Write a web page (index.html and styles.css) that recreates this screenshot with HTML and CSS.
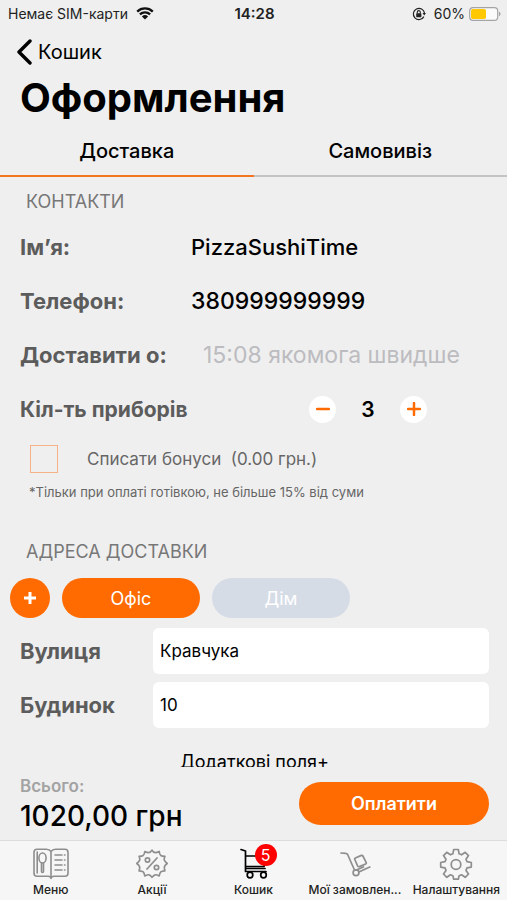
FILE: index.html
```html
<!DOCTYPE html>
<html lang="uk">
<head>
<meta charset="utf-8">
<meta name="viewport" content="width=device-width, initial-scale=1">
<title>Оформлення</title>
<link rel="stylesheet" href="styles.css">
</head>
<body>
<div class="status">
  <div class="status-side">
    <span>Немає SIM-карти</span>
    <svg class="wifi" viewBox="0 0 18 13"><path d="M1.2 4.6a11.2 11.2 0 0 1 15.6 0M3.9 7.4a7.4 7.4 0 0 1 10.2 0" fill="none" stroke="#111" stroke-width="2.3"/><path d="M9 12.6 5.9 9.5a4.5 4.5 0 0 1 6.2 0z" fill="#111"/></svg>
  </div>
  <strong class="clock">14:28</strong>
  <div class="status-side status-right">
    <svg class="lock" viewBox="0 0 14 14"><path d="M11.9 9.6a5.6 5.6 0 1 1 .6-3.4" fill="none" stroke="#222" stroke-width="1.2"/><path d="M10.5 6h3.5l-1.8 2.6z" fill="#222"/><rect x="4.2" y="6.2" width="5.2" height="4" rx=".6" fill="#222"/><path d="M5.3 6.5V5.1a1.5 1.5 0 0 1 3 0v1.4" fill="none" stroke="#222" stroke-width="1.1"/></svg>
    <span>60%</span>
    <svg class="battery" viewBox="0 0 32 14"><rect x=".7" y=".7" width="28" height="12.6" rx="3.4" fill="#fafafa" stroke="#a4a4a4" stroke-width="1.2"/><rect x="2" y="2" width="15" height="10" rx="1.8" fill="#ffc800"/><path d="M30 4.800c2 .6 2 3.800 0 4.400z" fill="#a4a4a4"/></svg>
  </div>
</div>

<header>
  <a class="back" href="#cart">
    <svg viewBox="0 0 16 26"><path d="M14 2 3 13l11 11" fill="none" stroke="#000" stroke-width="3.4" stroke-linecap="round" stroke-linejoin="round"/></svg>
    <span>Кошик</span>
  </a>
  <h1>Оформлення</h1>
</header>

<div class="tabs" role="tablist">
  <button class="tab tab-active" type="button" role="tab" aria-selected="true">Доставка</button>
  <button class="tab" type="button" role="tab" aria-selected="false">Самовивіз</button>
</div>

<main>
  <h2>КОНТАКТИ</h2>
  <div class="row">
    <label for="name">Ім’я:</label>
    <input class="plain" id="name" type="text" value="PizzaSushiTime">
  </div>
  <div class="row">
    <label for="phone">Телефон:</label>
    <input class="plain phone" id="phone" type="tel" value="380999999999">
  </div>
  <div class="row">
    <label for="time">Доставити о:</label>
    <input class="plain time" id="time" type="text" placeholder="15:08 якомога швидше">
  </div>
  <div class="row">
    <span class="row-label">Кіл-ть приборів</span>
    <div class="stepper">
      <button type="button" aria-label="Менше"><svg viewBox="0 0 14 14"><path d="M1 7h12"/></svg></button>
      <output>3</output>
      <button type="button" aria-label="Більше"><svg viewBox="0 0 14 14"><path d="M1 7h12M7 1v12"/></svg></button>
    </div>
  </div>
  <div class="bonus">
    <input id="bonus" type="checkbox">
    <label for="bonus">Списати бонуси&nbsp; (0.00 грн.)</label>
  </div>
  <p class="note">*Тільки при оплаті готівкою, не більше 15% від суми</p>

  <h2>АДРЕСА ДОСТАВКИ</h2>
  <div class="chips">
    <button class="add" type="button" aria-label="Додати адресу"><svg viewBox="0 0 14 14"><path d="M1 7h12M7 1v12"/></svg></button>
    <button class="chip chip-active" type="button">Офіс</button>
    <button class="chip" type="button">Дім</button>
  </div>
  <div class="field">
    <label for="street">Вулиця</label>
    <input id="street" type="text" value="Кравчука">
  </div>
  <div class="field">
    <label for="house">Будинок</label>
    <input id="house" type="text" value="10">
  </div>
  <button class="more" type="button">Додаткові поля+</button>
</main>

<section class="total">
  <div>
    <div class="total-label">Всього:</div>
    <div class="total-sum">1020,00 грн</div>
  </div>
  <button class="pay" type="button">Оплатити</button>
</section>

<nav>
  <a href="#menu">
    <svg viewBox="0 0 36 32"><g fill="none" stroke="#8e8e8e" stroke-width="1.600" stroke-linecap="round" stroke-linejoin="round"><path d="M18 3.500C17 2 15.500 1.200 13.500 1.200H4a3 3 0 0 0-3 3v21a3 3 0 0 0 3 3h11q3 0 3 2.300 0-2.300 3-2.300h11a3 3 0 0 0 3-3v-21a3 3 0 0 0-3-3h-9.500C20.500 1.200 19 2 18 3.500zV29"/><ellipse cx="9.500" cy="10" rx="3.600" ry="5"/><path d="M8.500 15v8.500a1 1 0 0 0 2 0V15M4.200 4v21M22 7h7M22 12h7M22 17h7M22 22h7M31.500 7h.5M31.500 12h.5M31.500 17h.5M31.500 22h.5"/></g></svg>
    <span>Меню</span>
  </a>
  <a href="#promo">
    <svg viewBox="0 0 36 32"><g fill="none" stroke="#8e8e8e" stroke-width="1.700" stroke-linecap="round" stroke-linejoin="round"><path d="M18 2.200q1.800 2.600 3.200 2.500t4-1.200q.4 3.200 1.600 3.900t4.100.9q-1.200 2.900-.5 4.100t2.800 3.100q-2.500 1.900-2.800 3.200t.5 4.100q-3.100.2-4.100 1.100t-1.600 4q-2.800-1.400-4.100-1.100T18 29.300q-1.800-2.300-3.100-2.500t-4.100 1.100q-.6-3.100-1.600-4t-4.100-1.100q.9-2.800.5-4.100t-2.800-3.200q2.200-1.900 2.800-3.100t-.5-4.100q2.900-.2 4.100-.9t1.600-3.900q2.600 1.300 4 1.200T18 2.200z"/><path d="m13 21 10-11"/><circle cx="13.500" cy="12" r="2.200"/><circle cx="22.500" cy="19.500" r="2.200"/></g></svg>
    <span>Акції</span>
  </a>
  <a href="#cart" aria-current="page">
    <svg viewBox="0 0 36 32"><g fill="none" stroke="#000" stroke-width="1.700" stroke-linecap="round" stroke-linejoin="round"><path d="M5 1.500 9.500 3v20.500H30M10 8h20.500l-2.500 10.500H10M10 20.500h19"/><circle cx="14" cy="27" r="2.800"/><circle cx="27.500" cy="27" r="2.800"/></g></svg>
    <span>Кошик</span>
    <b class="badge">5</b>
  </a>
  <a href="#orders">
    <svg viewBox="0 0 36 32"><g fill="none" stroke="#8e8e8e" stroke-width="1.700" stroke-linecap="round" stroke-linejoin="round"><path d="M4 5l4.800.3q1.200 0 1.800 1.200L17.500 22"/><circle cx="19" cy="24.800" r="2.900"/><path d="m21.800 24 11-5M20 21.700l6.500-2.700M20.600 17.800l-2.800-6.300q-.5-1 .6-1.500l6-2.600q1-.4 1.500.6l3.200 6.300q.6 1.200-.5 1.700l-5.600 2.400q-1.700.8-2.400-.6z"/></g></svg>
    <span>Мої замовлен...</span>
  </a>
  <a href="#settings">
    <svg viewBox="0 0 36 32"><g fill="none" stroke="#8e8e8e" stroke-width="1.700" stroke-linejoin="round"><path d="M15.700 1.500h4.600l.8 4.300 2.500 1 3.600-2.500 3.300 3.300-2.500 3.600 1 2.500 4.300.8v4.600l-4.300.8-1 2.500 2.500 3.600-3.300 3.300-3.600-2.500-2.500 1-.8 3.400h-4.600l-.8-3.400-2.500-1-3.600 2.500-3.300-3.300L8 22.400l-1-2.500-4.300-.8v-4.600l4.300-.8 1-2.500-2.500-3.600 3.300-3.300 3.600 2.500 2.500-1z"/><circle cx="18" cy="16.500" r="4.800"/></g></svg>
    <span>Налаштування</span>
  </a>
</nav>
</body>
</html>
```
FILE: styles.css
```css
* {
  box-sizing: border-box;
}

body {
  margin: 0;
  height: 100vh;
  display: flex;
  flex-direction: column;
  background: #efefef;
  color: #000;
  font-family: Inter, "Noto Sans", sans-serif;
  font-size: 20px;
}

button,
input {
  font: inherit;
  color: inherit;
  border: 0;
  padding: 0;
  margin: 0;
  background: none;
}

a {
  color: inherit;
  text-decoration: none;
}

svg {
  display: block;
  flex: none;
}

.status {
  display: flex;
  align-items: center;
  height: 27px;
  padding: 0 6px 0 8px;
  font-size: 14px;
  color: #222;
}

.status-side {
  flex: 1;
  display: flex;
  align-items: center;
  gap: 8px;
}

.status-right {
  justify-content: flex-end;
  gap: 4px;
}

.clock {
  font-size: 15px;
  font-weight: 600;
}

.wifi {
  width: 18px;
  height: 13px;
}

.lock {
  width: 14px;
  height: 14px;
  margin-right: 4px;
}

.battery {
  width: 32px;
  height: 14px;
}

header {
  padding: 9px 16px 0;
}

.back {
  display: inline-flex;
  align-items: center;
  gap: 6px;
  height: 32px;
}

.back svg {
  width: 16px;
  height: 26px;
}

h1 {
  margin: 3px 4px 0;
  font-size: 40px;
  line-height: 50px;
  font-weight: 700;
}

.tabs {
  display: flex;
  height: 54px;
}

.tab {
  flex: 1;
  padding-top: 3px;
  border-bottom: 2px solid #c4c4c4;
  font-weight: 500;
}

.tab-active {
  border-bottom-color: #f47521;
}

main {
  flex: 1;
  min-height: 0;
  overflow: hidden;
  padding: 13px 18px 0 20px;
}

h2 {
  margin: 0 0 6px 6px;
  font-size: 18px;
  line-height: 24px;
  font-weight: 400;
  color: #777;
}

.row {
  display: flex;
  align-items: center;
  height: 54px;
}

.row label,
.row-label {
  width: 171px;
  flex: none;
  font-weight: 700;
  color: #5c5c5c;
}

.row label {
  font-size: 22px;
}

.row-label {
  font-size: 21px;
}

.plain {
  flex: 1;
  min-width: 0;
  height: 40px;
  font-size: 22px;
  font-weight: 500;
}

.phone {
  font-size: 23px;
}

.time {
  padding-left: 12px;
  font-weight: 400;
  font-size: 23px;
}

.time::placeholder {
  color: #bcbcc0;
}

.stepper {
  display: flex;
  align-items: center;
  justify-content: space-between;
  width: 118px;
  margin: 0 62px 0 auto;
  font-size: 21px;
  font-weight: 600;
}

.stepper button {
  display: grid;
  place-items: center;
  width: 27px;
  height: 27px;
  border-radius: 50%;
  background: #fff;
}

.stepper svg,
.add svg {
  width: 14px;
  height: 14px;
  stroke: #ff6b00;
  stroke-width: 2.5;
  stroke-linecap: round;
}

.bonus {
  display: flex;
  align-items: center;
  gap: 29px;
  height: 46px;
  padding-left: 10px;
  font-size: 17px;
  color: #666;
}

.bonus input {
  appearance: none;
  width: 28px;
  height: 28px;
  border: 1px solid #f6b184;
}

.note {
  margin: 0 0 38px 9px;
  font-size: 13px;
  line-height: 20px;
  color: #666;
}

.chips {
  display: flex;
  gap: 12px;
  margin: 14px 0 10px -10px;
}

.chips button {
  height: 40px;
  border-radius: 20px;
  color: #fff;
  font-size: 18px;
}

.add {
  display: grid;
  place-items: center;
  width: 40px;
  background: #ff6b00;
}

.add svg {
  stroke: #fff;
  stroke-width: 3;
  stroke-linecap: butt;
}

.chip {
  width: 138px;
  background: #d6dce6;
}

.chips .chip-active {
  background: #ff6b00;
}

.field {
  display: flex;
  align-items: center;
  margin-bottom: 8px;
}

.field label {
  width: 133px;
  flex: none;
  font-size: 22px;
  font-weight: 700;
  color: #5c5c5c;
}

.field input {
  flex: 1;
  min-width: 0;
  height: 46px;
  padding: 0 7px;
  border-radius: 6px;
  background: #fff;
  font-size: 17px;
}

.more {
  display: block;
  margin: 22px auto 0;
  font-size: 18px;
  line-height: 24px;
}

.total {
  display: flex;
  align-items: center;
  justify-content: space-between;
  height: 73px;
  padding: 0 18px 0 20px;
}

.total-label {
  font-size: 17px;
  line-height: 24px;
  font-weight: 600;
  color: #a3a3a3;
}

.total-sum {
  font-size: 28px;
  line-height: 36px;
  font-weight: 500;
}

.pay {
  width: 190px;
  height: 43px;
  border-radius: 22px;
  background: #ff6b00;
  color: #fff;
  font-size: 18px;
  font-weight: 600;
}

nav {
  display: flex;
  height: 60px;
  border-top: 1px solid #dcdcdc;
  background: #f6f6f6;
}

nav a {
  position: relative;
  flex: 1 1 0;
  min-width: 0;
  display: flex;
  flex-direction: column;
  align-items: center;
  gap: 2px;
  padding-top: 7px;
  font-size: 12px;
  line-height: 16px;
  font-weight: 500;
  color: #222;
  white-space: nowrap;
}

nav svg {
  width: 36px;
  height: 32px;
}

.badge {
  position: absolute;
  top: 3px;
  left: calc(50% + 1px);
  width: 22px;
  height: 22px;
  border-radius: 50%;
  background: #f00;
  color: #fff;
  font-size: 16px;
  line-height: 22px;
  font-weight: 400;
  text-align: center;
}
```
